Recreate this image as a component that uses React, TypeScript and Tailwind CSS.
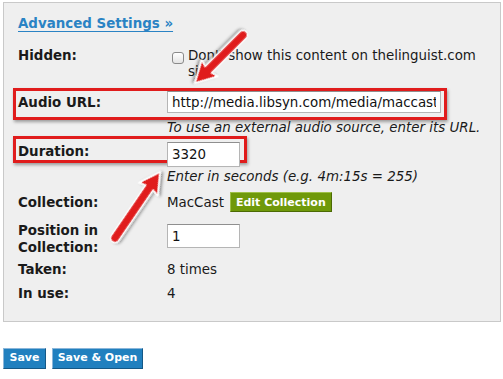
import React, { FC } from 'react';

const Arrow: FC<{ x: number; y: number; angle: number; length: number }> = ({ x, y, angle, length }) => {
  const L = length;
  const d = `M0,-4.5 L${L - 19},-4.5 L${L - 21},-11.5 L${L},0 L${L - 21},11.5 L${L - 19},4.5 L0,4.5 A4.5,4.5 0 0 1 0,-4.5 Z`;
  return (
    <g transform={`translate(${x} ${y}) rotate(${angle})`} filter="url(#arrowShadow)">
      <path d={d} fill="#e01a1a" stroke="#ffffff" strokeWidth={1.5} strokeLinejoin="round" />
    </g>
  );
};

const Label: FC<{ children: React.ReactNode; className?: string }> = ({ children, className = '' }) => (
  <div className={`w-[149px] shrink-0 font-bold text-[13.4px] leading-4 text-[#1a1a1a] ${className}`}>{children}</div>
);

const App: FC = () => {
  return (
    <div className="relative w-[503px] h-[379px] overflow-hidden bg-white font-['DejaVu_Sans',sans-serif] text-[13.4px] text-[#1a1a1a]">
      <div className="ml-[3px] mt-[2px] w-[498px] h-[320px] border border-[#c9c9c9] bg-[#efefef] pl-[14px] pt-[13px]">
        <a href="#" className="block w-fit font-bold leading-4 text-[#2a83c4] underline underline-offset-[3px]">
          Advanced Settings »
        </a>

        <div className="mt-4 flex">
          <Label>Hidden:</Label>
          <div className="flex">
            <span className="ml-[5px] mt-[4px] h-[12px] w-[12px] shrink-0 rounded-[3px] border border-[#8a8a8a] bg-linear-to-b from-white to-[#e4e4e4]" />
            <span className="ml-[4px] w-[300px] leading-4">Don't show this content on thelinguist.com site.</span>
          </div>
        </div>

        <div className="mt-[8px] -ml-[5px] flex h-[32px] w-[434px] items-start border-[3px] border-[#e01c1c] shadow-[1px_2px_3px_rgba(0,0,0,0.35)]">
          <Label className="w-[151px] pl-[2px] pt-[4px]">Audio URL:</Label>
          <input
            readOnly
            value="http://media.libsyn.com/media/maccast/maccast0123.mp3"
            className="h-[22px] w-[274px] border border-[#b5b5b5] border-t-[#8f8f8f] bg-white px-[4px] text-[13.4px] text-[#111] outline-none"
          />
        </div>
        <div className="pl-[149px] italic leading-[15px]">To use an external audio source, enter its URL.</div>

        <div className="-ml-[5px] mt-[1px] flex h-[27px] w-[234px] items-start border-[3px] border-[#e01c1c] shadow-[1px_2px_3px_rgba(0,0,0,0.35)]">
          <Label className="w-[151px] pl-[2px] pt-[5px]">Duration:</Label>
          <input
            readOnly
            value="3320"
            className="relative z-10 mt-[3px] h-[25px] w-[73px] border border-[#b5b5b5] border-t-[#8f8f8f] bg-white px-[4px] text-[13.4px] text-[#111] outline-none"
          />
        </div>
        <div className="mt-[6px] pl-[149px] italic leading-4">Enter in seconds (e.g. 4m:15s = 255)</div>

        <div className="mt-[7px] flex items-start">
          <Label className="pt-[3px]">Collection:</Label>
          <span className="pt-[3px] leading-4">MacCast</span>
          <button className="ml-[6px] h-[20px] border border-[#9ec048] border-b-[#4c6a04] border-r-[#4c6a04] bg-[#6f990a] px-[5px] text-[11px] font-bold leading-[17px] text-white">
            Edit Collection
          </button>
        </div>

        <div className="mt-[10px] flex items-start">
          <Label className="leading-[17px]">
            Position in
            <br />
            Collection:
          </Label>
          <input
            readOnly
            value="1"
            className="mt-[2px] h-[24px] w-[73px] border border-[#b5b5b5] border-t-[#8f8f8f] bg-white px-[4px] text-[13.4px] text-[#111] outline-none"
          />
        </div>

        <div className="mt-[6px] flex">
          <Label>Taken:</Label>
          <span className="leading-4">8 times</span>
        </div>
        <div className="mt-[8px] flex">
          <Label>In use:</Label>
          <span className="leading-4">4</span>
        </div>
      </div>

      <div className="ml-[3px] mt-[26px] flex gap-[6px]">
        <button className="h-[21px] w-[43px] border border-[#8ab6da] border-b-[#155886] border-r-[#155886] bg-[#2180bf] text-[11px] font-bold text-white">
          Save
        </button>
        <button className="h-[21px] w-[91px] border border-[#8ab6da] border-b-[#155886] border-r-[#155886] bg-[#2180bf] text-[11px] font-bold text-white">
          Save &amp; Open
        </button>
      </div>

      <svg className="pointer-events-none absolute left-0 top-0" width={503} height={379}>
        <defs>
          <filter id="arrowShadow" x="-30%" y="-30%" width="160%" height="160%">
            <feDropShadow dx="1" dy="2" stdDeviation="1.5" floodColor="#000" floodOpacity="0.4" />
          </filter>
        </defs>
        <Arrow x={243} y={35} angle={135} length={68} />
        <Arrow x={115} y={238} angle={-55.7} length={80} />
      </svg>
    </div>
  );
};

export default App;
